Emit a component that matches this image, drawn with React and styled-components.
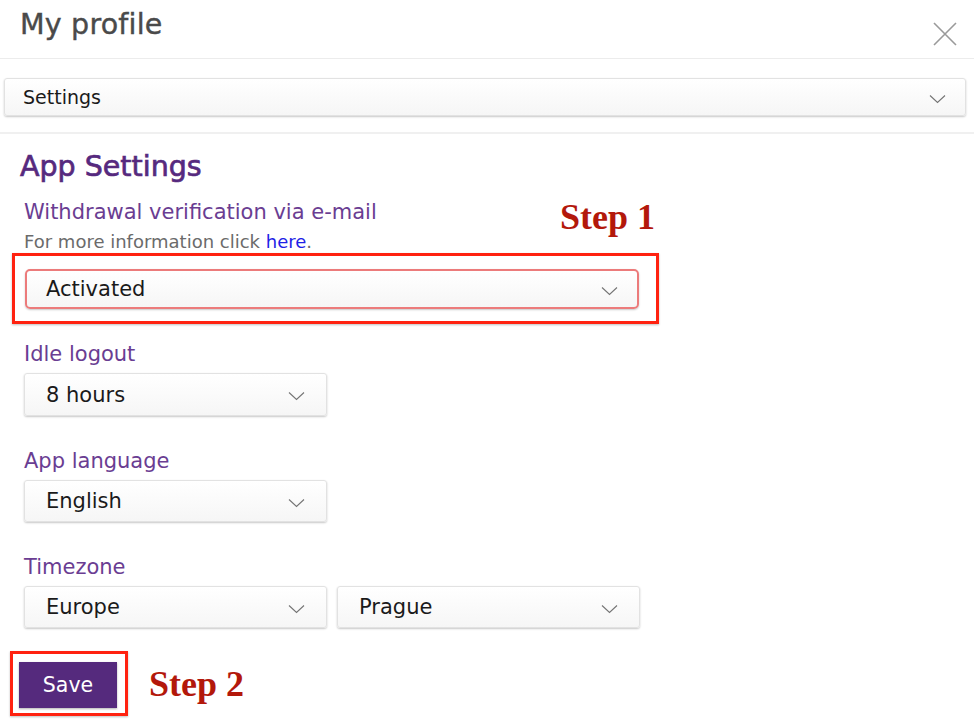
import React from "react";
import styled, { createGlobalStyle } from "styled-components";

const Global = createGlobalStyle`
  html, body { margin: 0; padding: 0; background: #fff; }
  body { font-family: "DejaVu Sans", "Liberation Sans", sans-serif; }
`;

const Page = styled.div`
  width: 974px;
  height: 720px;
  overflow: hidden;
  background: #fff;
`;

const Header = styled.header`
  height: 58px;
  border-bottom: 1px solid #ececec;
  display: flex;
  align-items: flex-start;
  justify-content: space-between;
  padding: 0 17px 0 20px;
`;

const Title = styled.h1`
  margin: 0;
  padding-top: 7px;
  font-size: 28.5px;
  font-weight: 400;
  color: #4a4a4a;
  line-height: 36px;
  letter-spacing: 0.2px;
  -webkit-text-stroke: 0.4px #4a4a4a;
`;

const CloseButton = styled.button`
  border: 0;
  background: none;
  padding: 0;
  margin-top: 22px;
  width: 24px;
  height: 24px;
  cursor: pointer;
`;

const SectionBar = styled.div`
  padding: 19px 8px 16px 4px;
  border-bottom: 2px solid #f0f0f0;
`;

const SelectBox = styled.div`
  box-sizing: border-box;
  width: ${(p) => p.$w || "100%"};
  height: ${(p) => p.$h || 42}px;
  display: flex;
  align-items: center;
  justify-content: space-between;
  padding: 0 ${(p) => p.$pr || 21}px 0 ${(p) => p.$pl || 21}px;
  background: linear-gradient(#ffffff, #f6f6f6);
  border: ${(p) => (p.$highlight ? "2px solid #ec7b7b" : "1px solid #e2e2e2")};
  border-radius: ${(p) => (p.$highlight ? 5 : 3)}px;
  box-shadow: 0 1px 2px rgba(0, 0, 0, 0.22);
  font-size: ${(p) => p.$fs || 21}px;
  color: #1a1a1a;
`;

const Chevron = styled.svg`
  width: 17px;
  height: 10px;
  flex: none;
  margin-top: 3px;
`;

const Content = styled.div`
  padding: 17px 0 0 24px;
`;

const Heading = styled.h2`
  margin: 0 0 0 -4px;
  font-size: 28.5px;
  font-weight: 400;
  color: #56297e;
  line-height: 32px;
  -webkit-text-stroke: 0.7px #56297e;
`;

const FieldHead = styled.div`
  width: 631px;
  display: flex;
  justify-content: space-between;
  align-items: flex-start;
  margin-top: 16px;
`;

const Label = styled.div`
  font-size: 21px;
  color: #6a3d92;
  line-height: 26px;
  margin-top: ${(p) => p.$mt || 0}px;
  margin-bottom: 6px;
`;

const Help = styled.div`
  font-size: 18px;
  color: #6b6b6b;
  line-height: 22px;
  margin-top: 2px;
  a { color: #1f1fe6; text-decoration: none; }
`;

const StepText = styled.div`
  font-family: "Liberation Serif", "Times New Roman", serif;
  font-weight: 700;
  font-size: 36px;
  color: #b3180b;
  line-height: 40px;
  margin-top: ${(p) => p.$mt || 0}px;
`;

const Highlight = styled.div`
  box-sizing: border-box;
  border: 3px solid #ff2210;
  width: ${(p) => p.$w}px;
  padding: ${(p) => p.$pad};
  margin-left: ${(p) => p.$ml || 0}px;
  box-shadow: 0 1px 2px rgba(0, 0, 0, 0.25);
`;

const Row = styled.div`
  display: flex;
  gap: 10px;
`;

const SaveRow = styled.div`
  display: flex;
  align-items: center;
  gap: 21px;
  margin-top: 23px;
`;

const SaveButton = styled.button`
  display: block;
  width: 98px;
  height: 46px;
  border: 0;
  background: #552a7d;
  color: #fff;
  font-family: inherit;
  font-size: 20.5px;
  box-shadow: 0 1px 2px rgba(0, 0, 0, 0.3);
`;

const ChevronIcon = () => (
  <Chevron viewBox="0 0 17 10">
    <path d="M1 1.5 L8.5 8.5 L16 1.5" fill="none" stroke="#747474" strokeWidth="1.1" />
  </Chevron>
);

const Select = ({ children, ...rest }) => (
  <SelectBox {...rest}>
    <span>{children}</span>
    <ChevronIcon />
  </SelectBox>
);

export default function App() {
  return (
    <Page>
      <Global />
      <Header>
        <Title>My profile</Title>
        <CloseButton aria-label="Close">
          <svg width="24" height="24" viewBox="0 0 24 24">
            <path d="M1 1 L23 23 M23 1 L1 23" stroke="#9a9a9a" strokeWidth="1.6" fill="none" />
          </svg>
        </CloseButton>
      </Header>

      <SectionBar>
        <Select $h={38} $fs={19} $pl={18} $pr={19}>Settings</Select>
      </SectionBar>

      <Content>
        <Heading>App Settings</Heading>

        <FieldHead>
          <div>
            <Label>Withdrawal verification via e-mail</Label>
            <Help>
              For more information click <a href="#">here</a>.
            </Help>
          </div>
          <StepText $mt={-2}>Step 1</StepText>
        </FieldHead>

        <Highlight $w={647} $ml={-12} $pad="13px 17px 12px 10px">
          <Select $highlight $w="614px" $h={40} $pl={19} $pr={19}>Activated</Select>
        </Highlight>

        <Label $mt={17}>Idle logout</Label>
        <Select $w="303px" $h={43}>8 hours</Select>

        <Label $mt={32}>App language</Label>
        <Select $w="303px" $h={42}>English</Select>

        <Label $mt={32}>Timezone</Label>
        <Row>
          <Select $w="303px" $h={42}>Europe</Select>
          <Select $w="303px" $h={42}>Prague</Select>
        </Row>

        <SaveRow>
          <Highlight $w={118} $ml={-14} $pad="8px 8px 5px 6px">
            <SaveButton>Save</SaveButton>
          </Highlight>
          <StepText>Step 2</StepText>
        </SaveRow>
      </Content>
    </Page>
  );
}
